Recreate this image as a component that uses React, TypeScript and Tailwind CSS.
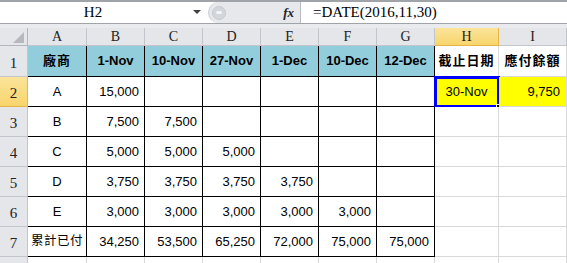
import React from 'react'

const cols = ['A', 'B', 'C', 'D', 'E', 'F', 'G', 'H', 'I']

type Row = {
  n: number
  h: string
  cells: string[]
}

const rows: Row[] = [
  { n: 1, h: 'h-[31px]', cells: ['廠商', '1-Nov', '10-Nov', '27-Nov', '1-Dec', '10-Dec', '12-Dec', '截止日期', '應付餘額'] },
  { n: 2, h: 'h-[30px]', cells: ['A', '15,000', '', '', '', '', '', '30-Nov', '9,750'] },
  { n: 3, h: 'h-[30px]', cells: ['B', '7,500', '7,500', '', '', '', '', '', ''] },
  { n: 4, h: 'h-[30px]', cells: ['C', '5,000', '5,000', '5,000', '', '', '', '', ''] },
  { n: 5, h: 'h-[30px]', cells: ['D', '3,750', '3,750', '3,750', '3,750', '', '', '', ''] },
  { n: 6, h: 'h-[30px]', cells: ['E', '3,000', '3,000', '3,000', '3,000', '3,000', '', '', ''] },
  { n: 7, h: 'h-[30px]', cells: ['累計已付', '34,250', '53,500', '65,250', '72,000', '75,000', '75,000', '', ''] },
  { n: 8, h: 'h-[30px]', cells: ['', '', '', '', '', '', '', '', ''] },
]

const cjk = "font-['Liberation_Sans','Noto_Sans_CJK_TC',sans-serif]"
const serif = "font-['Liberation_Serif','DejaVu_Serif',serif]"

function DataCell({ row, col, value, h }: { row: number; col: number; value: string; h: string }) {
  const inTable = row <= 7 && col <= 6
  const header = row === 1 && col <= 6
  const yellow = row === 2 && col >= 7
  const selected = row === 2 && col === 7

  const border = inTable ? 'border-r border-b border-black' : 'border-r border-b border-[#d9d9d9]'

  let bg = 'bg-white'
  if (header) bg = 'bg-[#92cddc]'
  if (yellow) bg = 'bg-[#ffff00]'

  let align = 'justify-end pr-[5px]'
  if (col === 0 || row === 1 || selected) align = 'justify-center'
  if (row === 2 && col === 8) align = 'justify-end pr-[6px]'

  let text = 'text-[13px]'
  if (row === 1 && col >= 1 && col <= 6) text = 'text-[13px] font-bold'
  if (row === 1 && (col === 0 || col >= 7)) text = 'text-[13px] font-bold tracking-[1px]'
  if (row === 7 && col === 0) text = 'text-[12.5px] tracking-[0.5px]'

  return (
    <div className={`${h} relative flex items-center ${border} ${bg} ${align} ${text} ${cjk} text-black whitespace-nowrap`}>
      {value}
      {selected && (
        <>
          <div className="absolute -left-px -top-px right-[-2px] bottom-[-2px] border-[3px] border-[#0000ff]" />
          <div className="absolute right-[-4px] bottom-[-4px] w-[6px] h-[6px] bg-black border border-white" />
        </>
      )}
    </div>
  )
}

export default function App() {
  return (
    <div className="w-[567px] h-[263px] overflow-hidden bg-white">
      <div className="h-[2px] bg-[#a0a3a8]" />
      <div className="h-[22px] flex border-b border-[#a0a3a8] bg-white">
        <div className={`w-[186px] flex items-center justify-center text-[15px] ${serif} text-black`}>H2</div>
        <div className="w-[22px] flex items-center justify-center">
          <svg width="8" height="5" viewBox="0 0 8 5">
            <path d="M0 0 L8 0 L4 4 Z" fill="#404040" />
          </svg>
        </div>
        <div className="w-[92px] flex items-center bg-[#e6e8eb] rounded-l-[11px] border-l border-[#c9ccd1]">
          <div className="ml-[3px] w-[14px] h-[14px] rounded-full bg-[#d3d6da] border border-[#c6c9ce] flex items-center justify-center">
            <div className="w-[6px] h-[3px] rounded-full bg-[#f4f5f6]" />
          </div>
          <div className={`ml-auto mr-[6px] text-[13px] italic font-bold ${serif} text-[#222]`}>fx</div>
        </div>
        <div className={`flex-1 flex items-center border-l border-[#b8bcc2] pl-[12px] text-[15px] ${serif} text-black`}>
          =DATE(2016,11,30)
        </div>
      </div>
      <div className="h-[4px] bg-[#e9ebee]" />
      <div className="grid grid-cols-[28px_59px_58px_58px_58px_58px_58px_58px_64px_68px]">
        <div className="h-[18px] bg-[#e4e6ea] border-r border-b border-[#b3b7bd] flex items-end justify-end pr-[3px] pb-[2px]">
          <svg width="11" height="11" viewBox="0 0 11 11">
            <path d="M11 0 L11 11 L0 11 Z" fill="#b5b9bf" />
          </svg>
        </div>
        {cols.map((c) => (
          <div
            key={c}
            className={`h-[18px] flex items-center justify-center text-[14px] ${serif} text-[#222] border-r border-b ${
              c === 'H'
                ? 'bg-gradient-to-b from-[#fbe49a] to-[#f8d56b] border-[#e5b54a]'
                : 'bg-[#e4e6ea] border-[#c2c6cc]'
            }`}
          >
            {c}
          </div>
        ))}
        {rows.map((r) => (
          <React.Fragment key={r.n}>
            <div
              className={`${r.h} flex items-end justify-center pb-[2px] text-[15px] ${serif} text-[#222] border-r border-b ${
                r.n === 2
                  ? 'bg-gradient-to-b from-[#fbe49a] to-[#f8d56b] border-[#e5b54a]'
                  : 'bg-[#e4e6ea] border-[#c2c6cc]'
              }`}
            >
              {r.n < 8 ? r.n : ''}
            </div>
            {r.cells.map((v, i) => (
              <DataCell key={i} row={r.n} col={i} value={v} h={r.h} />
            ))}
          </React.Fragment>
        ))}
      </div>
    </div>
  )
}
